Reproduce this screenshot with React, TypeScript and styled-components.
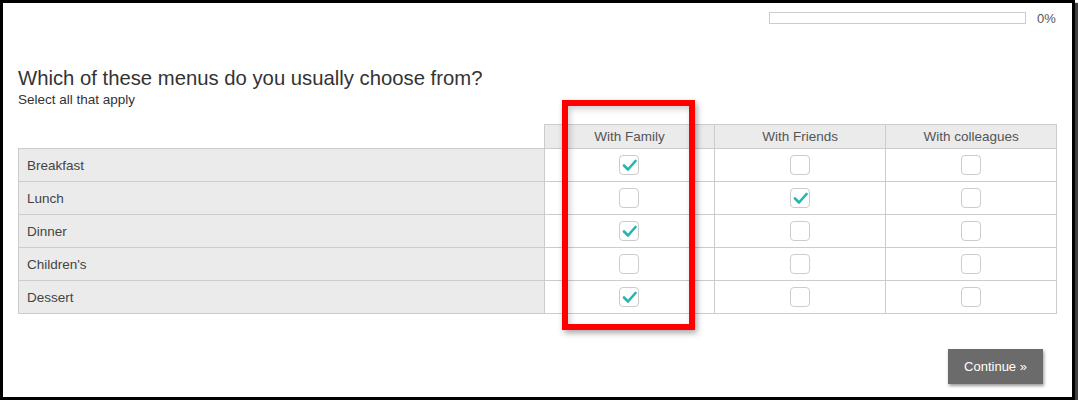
import styled, { createGlobalStyle } from 'styled-components';

const GlobalStyle = createGlobalStyle`
  html, body {
    margin: 0;
    padding: 0;
    background: #fff;
  }
  body {
    font-family: 'Liberation Sans', Arial, sans-serif;
    color: #333;
  }
`;

const columns = ['With Family', 'With Friends', 'With colleagues'];

const rows: { label: string; picked: boolean[] }[] = [
  { label: 'Breakfast', picked: [true, false, false] },
  { label: 'Lunch', picked: [false, true, false] },
  { label: 'Dinner', picked: [true, false, false] },
  { label: "Children's", picked: [false, false, false] },
  { label: 'Dessert', picked: [true, false, false] },
];

function CheckBox({ checked }: { checked: boolean }) {
  return (
    <S.Box>
      {checked && (
        <svg width="15" height="13" viewBox="0 0 15 13">
          <path
            d="M2 6.5 L6 10.5 L13.5 2"
            fill="none"
            stroke="#25b6ae"
            strokeWidth="2.6"
            strokeLinecap="round"
            strokeLinejoin="round"
          />
        </svg>
      )}
    </S.Box>
  );
}

export default function App() {
  const progress = 0;

  return (
    <>
      <GlobalStyle />
      <S.Frame>
        <S.ProgressRow>
          <S.ProgressTrack>
            <S.ProgressFill style={{ width: `${progress}%` }} />
          </S.ProgressTrack>
          <S.ProgressLabel>{progress}%</S.ProgressLabel>
        </S.ProgressRow>

        <S.Question>Which of these menus do you usually choose from?</S.Question>
        <S.Hint>Select all that apply</S.Hint>

        <S.GridWrap>
          <S.Grid>
            <thead>
              <tr>
                <S.Corner />
                {columns.map((c) => (
                  <S.HeadCell key={c}>{c}</S.HeadCell>
                ))}
              </tr>
            </thead>
            <tbody>
              {rows.map((r) => (
                <tr key={r.label}>
                  <S.RowLabel>{r.label}</S.RowLabel>
                  {r.picked.map((p, i) => (
                    <S.Cell key={i}>
                      <CheckBox checked={p} />
                    </S.Cell>
                  ))}
                </tr>
              ))}
            </tbody>
          </S.Grid>
          <S.Highlight />
        </S.GridWrap>

        <S.Footer>
          <S.ContinueButton>Continue »</S.ContinueButton>
        </S.Footer>
      </S.Frame>
    </>
  );
}

const S = {
  Frame: styled.div`
    box-sizing: border-box;
    width: 1075px;
    height: 400px;
    border: 3px solid #000;
    box-shadow: 3px 3px 1px rgba(0, 0, 0, 0.75);
    padding: 0 15px;
    display: flex;
    flex-direction: column;
  `,

  ProgressRow: styled.div`
    display: flex;
    align-items: center;
    justify-content: flex-end;
    gap: 11px;
    padding-top: 8px;
    padding-right: 1px;
    height: 14px;
  `,

  ProgressTrack: styled.div`
    box-sizing: border-box;
    width: 257px;
    height: 12px;
    border: 1px solid #ccc;
    background: #fff;
  `,

  ProgressFill: styled.div`
    height: 100%;
    background: #25b6ae;
  `,

  ProgressLabel: styled.span`
    font-size: 13px;
    color: #555;
    width: 19px;
  `,

  Question: styled.h1`
    margin: 41px 0 0;
    font-size: 20.3px;
    font-weight: normal;
    line-height: 24px;
    color: #333;
  `,

  Hint: styled.div`
    font-size: 13.5px;
    line-height: 16px;
    color: #333;
    margin-top: 2px;
  `,

  GridWrap: styled.div`
    position: relative;
    margin-top: 16px;
  `,

  Grid: styled.table`
    width: 1039px;
    border-collapse: collapse;
    table-layout: fixed;
    font-size: 13.5px;
    color: #444;
  `,

  Corner: styled.th`
    width: 525px;
    padding: 0;
  `,

  HeadCell: styled.th`
    height: 23px;
    padding: 0;
    font-weight: normal;
    background: #ebebeb;
    border: 1px solid #ccc;
    color: #555;
    text-align: center;
    vertical-align: middle;
  `,

  RowLabel: styled.td`
    height: 32px;
    padding: 0 0 0 8px;
    background: #ebebeb;
    border: 1px solid #ccc;
    text-align: left;
    vertical-align: middle;
  `,

  Cell: styled.td`
    padding: 0;
    border: 1px solid #ccc;
    text-align: center;
    vertical-align: middle;
  `,

  Box: styled.span`
    box-sizing: border-box;
    display: inline-flex;
    align-items: center;
    justify-content: center;
    width: 20px;
    height: 20px;
    border: 1px solid #ccc;
    border-radius: 4px;
    background: #fff;
    vertical-align: middle;
  `,

  Highlight: styled.div`
    position: absolute;
    left: 544px;
    top: -24px;
    width: 133px;
    height: 230px;
    box-sizing: border-box;
    border: 6px solid #ff0000;
    box-shadow: 2px 3px 6px rgba(0, 0, 0, 0.35), inset 2px 3px 6px rgba(0, 0, 0, 0.2);
    pointer-events: none;
  `,

  Footer: styled.div`
    display: flex;
    justify-content: flex-end;
    margin-top: auto;
    padding: 0 14px 13px 0;
  `,

  ContinueButton: styled.button`
    width: 95px;
    height: 35px;
    border: none;
    background: #6b6b6b;
    color: #fff;
    font-family: 'Liberation Sans', Arial, sans-serif;
    font-size: 13px;
    box-shadow: 1px 2px 3px rgba(0, 0, 0, 0.4);
    cursor: pointer;
  `,
};
